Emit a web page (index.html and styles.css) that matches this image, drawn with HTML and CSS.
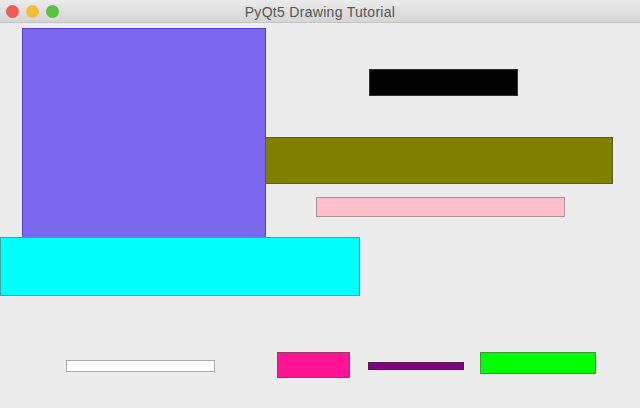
FILE: index.html
```html
<!DOCTYPE html>
<html>
<head>
<meta charset="utf-8">
<link rel="stylesheet" href="styles.css">
</head>
<body>
<div class="window">
  <div class="titlebar">
    <div class="lights">
      <span class="light red"></span>
      <span class="light yellow"></span>
      <span class="light green"></span>
    </div>
    <div class="title">PyQt5 Drawing Tutorial</div>
  </div>
  <div class="canvas">
    <div class="rect purple"></div>
    <div class="rect black"></div>
    <div class="rect olive"></div>
    <div class="rect pink"></div>
    <div class="rect cyan"></div>
    <div class="rect white"></div>
    <div class="rect magenta"></div>
    <div class="rect violet"></div>
    <div class="rect lime"></div>
  </div>
</div>
</body>
</html>
```
FILE: styles.css
```css
html, body {
  margin: 0;
  padding: 0;
  width: 640px;
  height: 408px;
  overflow: hidden;
  background: #ececec;
}
.window {
  display: flex;
  flex-direction: column;
  width: 640px;
  height: 408px;
}
.titlebar {
  position: relative;
  height: 22px;
  flex: none;
  background: linear-gradient(#ebebeb, #d5d5d5);
  border-bottom: 1px solid #c4c4c4;
  display: flex;
  align-items: center;
  justify-content: center;
}
.lights {
  position: absolute;
  left: 6px;
  top: 5px;
  display: flex;
  gap: 7px;
}
.light {
  width: 13px;
  height: 13px;
  border-radius: 50%;
}
.red { background: #ee5b57; }
.yellow { background: #f6bd3a; }
.green { background: #56c240; }
.title {
  font-family: "Liberation Sans", Arial, sans-serif;
  font-size: 14px;
  letter-spacing: 0.3px;
  color: #555;
  padding-top: 1px;
}
.canvas {
  position: relative;
  flex: 1;
}
.rect {
  position: absolute;
  box-sizing: border-box;
  border: 1px solid rgba(0, 0, 0, 0.3);
}
.purple { left: 22px; top: 5px; width: 244px; height: 210px; background: #7b68ee; border-color: #5a3fcf; }
.black { left: 369px; top: 46px; width: 149px; height: 27px; background: #000; border-color: #333; }
.olive { left: 265px; top: 114px; width: 348px; height: 47px; background: #808000; border-color: #5a5a1e; }
.pink { left: 316px; top: 174px; width: 249px; height: 20px; background: #ffc0cb; border-color: #aa9499; }
.cyan { left: 0; top: 214px; width: 360px; height: 59px; background: #00ffff; border-color: #3aa7a7; }
.white { left: 66px; top: 337px; width: 149px; height: 12px; background: #fff; border-color: #a8a8a8; }
.magenta { left: 277px; top: 329px; width: 73px; height: 26px; background: #ff1493; border-color: #9a3a6a; }
.violet { left: 368px; top: 339px; width: 96px; height: 8px; background: #800080; border-color: #4a1f4a; }
.lime { left: 480px; top: 329px; width: 116px; height: 22px; background: #00ff00; border-color: #3a9a3a; }
```
